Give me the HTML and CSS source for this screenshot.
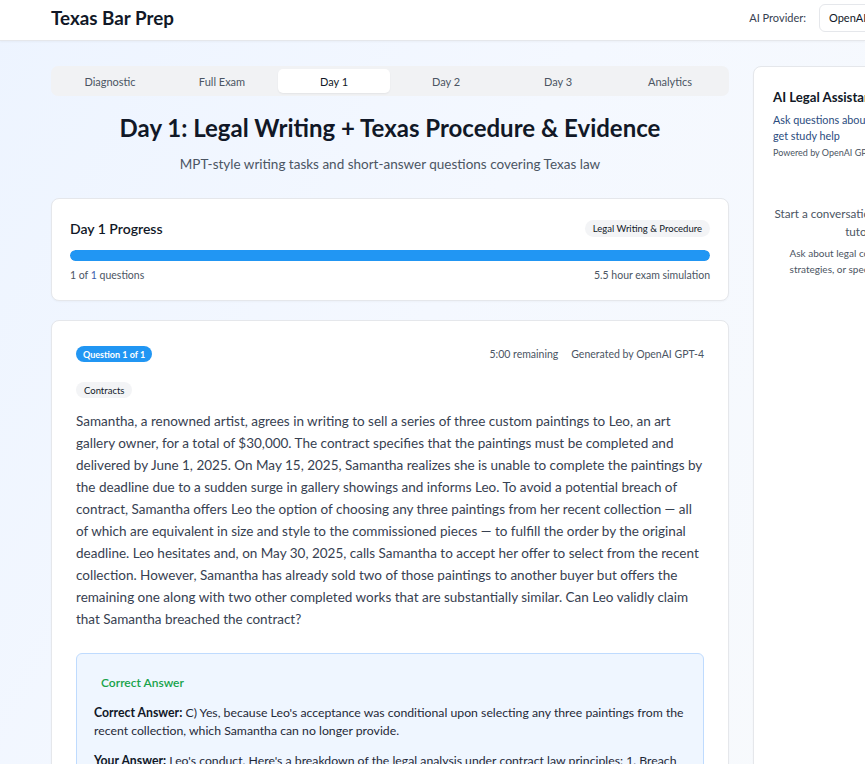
FILE: index.html
```html
<!DOCTYPE html>
<html lang="en">
<head>
<meta charset="utf-8">
<title>Texas Bar Prep</title>
<link rel="stylesheet" href="styles.css">
</head>
<body>
<header class="topbar">
  <div class="topbar-inner">
    <div class="brand">Texas Bar Prep</div>
    <div class="provider">
      <span class="provider-label">AI Provider:</span>
      <div class="provider-select">OpenAI GPT-4</div>
    </div>
  </div>
</header>

<div class="layout">
  <main class="main-col">
    <nav class="tabs">
      <div class="tab">Diagnostic</div>
      <div class="tab">Full Exam</div>
      <div class="tab active">Day 1</div>
      <div class="tab">Day 2</div>
      <div class="tab">Day 3</div>
      <div class="tab">Analytics</div>
    </nav>

    <h1 class="page-title">Day 1: Legal Writing + Texas Procedure &amp; Evidence</h1>
    <p class="page-sub">MPT-style writing tasks and short-answer questions covering Texas law</p>

    <section class="card progress-card">
      <div class="progress-head">
        <h2 class="progress-title">Day 1 Progress</h2>
        <span class="pill">Legal Writing &amp; Procedure</span>
      </div>
      <div class="bar"><div class="bar-fill" style="width:100%"></div></div>
      <div class="progress-foot">
        <span>1 of <span class="hl">1</span> questions</span>
        <span>5.5 hour exam simulation</span>
      </div>
    </section>

    <section class="card question-card">
      <div class="q-head">
        <span class="q-badge">Question 1 of 1</span>
        <div class="q-meta">
          <span>5:00 remaining</span>
          <span>Generated by OpenAI GPT-4</span>
        </div>
      </div>
      <span class="pill topic">Contracts</span>
      <p class="q-text">Samantha, a renowned artist, agrees in writing to sell a series of three custom paintings to Leo, an art gallery owner, for a total of $30,000. The contract specifies that the paintings must be completed and delivered by June 1, 2025. On May 15, 2025, Samantha realizes she is unable to complete the paintings by the deadline due to a sudden surge in gallery showings and informs Leo. To avoid a potential breach of contract, Samantha offers Leo the option of choosing any three paintings from her recent collection — all of which are equivalent in size and style to the commissioned pieces — to fulfill the order by the original deadline. Leo hesitates and, on May 30, 2025, calls Samantha to accept her offer to select from the recent collection. However, Samantha has already sold two of those paintings to another buyer but offers the remaining one along with two other completed works that are substantially similar. Can Leo validly claim that Samantha breached the contract?</p>

      <div class="answer-box">
        <h3 class="answer-title">Correct Answer</h3>
        <p class="answer-line"><strong>Correct Answer:</strong> C) Yes, because Leo's acceptance was conditional upon selecting any three paintings from the recent collection, which Samantha can no longer provide.</p>
        <p class="answer-line"><strong>Your Answer:</strong> Leo's conduct. Here's a breakdown of the legal analysis under contract law principles: 1. Breach of contract: Samantha's inability to deliver the commissioned paintings by the agreed deadline constitutes an anticipatory repudiation.</p>
      </div>
    </section>
  </main>

  <aside class="card assistant">
    <h2 class="assist-title">AI Legal Assistant</h2>
    <p class="assist-sub">Ask questions about Texas law or get study help</p>
    <p class="assist-powered">Powered by OpenAI GPT-4</p>
    <div class="assist-empty">
      <p class="empty-main">Start a conversation with your AI tutor</p>
      <p class="empty-hint">Ask about legal concepts, exam strategies, or specific questions</p>
    </div>
  </aside>
</div>
</body>
</html>
```

FILE: styles.css
```css
* { box-sizing: border-box; }

html, body {
  margin: 0;
  padding: 0;
  overflow: hidden;
}

body {
  font-family: "Lato", "Liberation Sans", sans-serif;
  color: #111827;
  background: linear-gradient(120deg, #edf4ff 0%, #f4f8ff 45%, #f8fafc 100%);
  min-height: 764px;
}

.topbar {
  background: #ffffff;
  border-bottom: 1px solid #e5e7eb;
  box-shadow: 0 1px 2px rgba(0,0,0,0.04);
  height: 41px;
}

.topbar-inner {
  width: 973px;
  padding-left: 51px;
  height: 35px;
  display: flex;
  align-items: center;
  justify-content: space-between;
}

.brand {
  font-size: 18.8px;
  font-weight: 700;
  color: #111827;
}

.provider {
  display: flex;
  align-items: center;
  gap: 13px;
}

.provider-label {
  font-size: 11px;
  color: #374151;
}

.provider-select {
  width: 154px;
  height: 28px;
  border: 1px solid #e5e7eb;
  border-radius: 6px;
  background: #fff;
  font-size: 11px;
  padding: 0 9px;
  display: flex;
  align-items: center;
  color: #111827;
}

.layout {
  width: 983px;
  padding: 25px 0 0 51px;
  display: flex;
  gap: 24px;
  align-items: flex-start;
}

.main-col {
  width: 678px;
  flex: none;
}

.tabs {
  background: #f1f2f4;
  border-radius: 7px;
  padding: 3px;
  height: 30px;
  display: grid;
  grid-template-columns: repeat(6, 1fr);
}

.tab {
  display: flex;
  align-items: center;
  justify-content: center;
  font-size: 11px;
  color: #4b5563;
  border-radius: 5px;
}

.tab.active {
  background: #ffffff;
  color: #111827;
  box-shadow: 0 1px 2px rgba(0,0,0,0.06);
}

.page-title {
  margin: 18px 0 0;
  text-align: center;
  font-size: 24px;
  line-height: 28px;
  font-weight: 700;
  color: #111827;
}

.page-sub {
  margin: 12px 0 0;
  text-align: center;
  font-size: 13.5px;
  line-height: 20px;
  color: #4b5563;
}

.card {
  background: #ffffff;
  border: 1px solid #e5e7eb;
  border-radius: 8px;
  box-shadow: 0 1px 2px rgba(0,0,0,0.03);
}

.progress-card {
  margin-top: 24px;
  padding: 18px;
}

.progress-head {
  height: 22px;
  display: flex;
  align-items: center;
  justify-content: space-between;
}

.progress-title {
  margin: 0;
  font-size: 14px;
  font-weight: 600;
  color: #111827;
}

.pill {
  display: inline-flex;
  align-items: center;
  height: 17px;
  padding: 0 8px;
  border-radius: 9px;
  background: #f3f4f6;
  font-size: 9.5px;
  color: #111827;
}

.bar {
  margin-top: 11px;
  height: 11px;
  border-radius: 6px;
  background: #e5e7eb;
  overflow: hidden;
}

.bar-fill {
  height: 100%;
  background: #2196f3;
  border-radius: 6px;
}

.progress-foot {
  margin-top: 7px;
  display: flex;
  justify-content: space-between;
  font-size: 10.5px;
  line-height: 14px;
  color: #4b5563;
}

.hl { color: #3b5bab; }

.question-card {
  margin-top: 19px;
  padding: 25px 24px 24px;
}

.q-head {
  display: flex;
  justify-content: space-between;
  align-items: center;
}

.q-badge {
  display: inline-flex;
  align-items: center;
  height: 16px;
  padding: 0 7px;
  border-radius: 8px;
  background: #2196f3;
  color: #ffffff;
  font-size: 9px;
  font-weight: 700;
}

.q-meta {
  display: flex;
  gap: 13px;
  font-size: 10.5px;
  color: #4b5563;
}

.topic {
  margin-top: 20px;
  height: 16px;
}

.q-text {
  margin: 12px 0 0;
  font-size: 13.5px;
  line-height: 22px;
  color: #374151;
}

.answer-box {
  margin-top: 23px;
  background: #eff6ff;
  border: 1px solid #bfdbfe;
  border-radius: 6px;
  padding: 20px 17px 16px;
}

.answer-title {
  margin: 0 0 0 7px;
  font-size: 12px;
  line-height: 18px;
  font-weight: 600;
  color: #16a34a;
}

.answer-line {
  margin: 12px 0 0;
  font-size: 12.25px;
  line-height: 18px;
  color: #1f2937;
}

.answer-line strong { color: #111827; }

.assistant {
  width: 210px;
  flex: none;
  height: 720px;
  padding: 19px;
}

.assist-title {
  margin: 0;
  font-size: 13.2px;
  line-height: 22px;
  font-weight: 700;
  white-space: nowrap;
  color: #111827;
}

.assist-sub {
  margin: 4px 0 0;
  font-size: 10.8px;
  line-height: 16px;
  color: #2b4c7e;
}

.assist-powered {
  margin: 2px 0 0;
  font-size: 9px;
  line-height: 14px;
  white-space: nowrap;
  color: #4b5563;
}

.assist-empty {
  margin-top: 44px;
  text-align: center;
}

.empty-main {
  margin: 0;
  font-size: 11.7px;
  line-height: 18px;
  color: #4b5563;
}

.empty-hint {
  margin: 5px 0 0;
  font-size: 10px;
  line-height: 16px;
  color: #4b5563;
}
```
